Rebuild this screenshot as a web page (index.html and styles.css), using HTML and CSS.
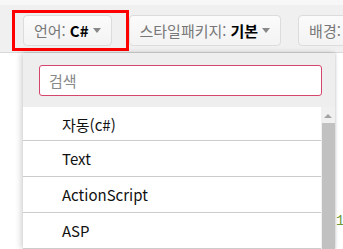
FILE: index.html
```html
<!DOCTYPE html>
<html lang="ko">
<head>
    <meta charset="UTF-8">
    <meta name="viewport" content="width=device-width, initial-scale=1.0">
    <title>코드 하이라이트</title>
    <link rel="stylesheet" href="styles.css">
</head>
<body>
    <div class="top-gap"></div>
    <div class="toolbar">
        <button class="select-btn">언어: <b>C#</b><span class="caret"></span></button>
        <button class="select-btn">스타일패키지: <b>기본</b><span class="caret"></span></button>
        <button class="select-btn">배경: <b>흰색</b><span class="caret"></span></button>
    </div>
    <div class="editor">
        <span class="line-no">1</span>
    </div>

    <!-- annotation around the language button -->
    <div class="highlight-box"></div>

    <div class="dropdown">
        <div class="search-wrap">
            <input type="text" class="search" placeholder="검색" autofocus>
        </div>
        <div class="list-wrap">
            <ul class="lang-list">
                <li class="first">자동(c#)</li>
                <li>Text</li>
                <li>ActionScript</li>
                <li>ASP</li>
            </ul>
            <div class="scrollbar">
                <span class="arrow-up"></span>
                <div class="thumb"></div>
            </div>
        </div>
    </div>
</body>
</html>
```

FILE: styles.css
```css
body {
    font-family: "Noto Sans CJK KR", "Noto Sans", sans-serif;
    margin: 0;
    padding: 0;
    background-color: #fff;
    overflow: hidden;
}
.top-gap {
    height: 5px;
    background-color: #f7f7f7;
}
.toolbar {
    display: flex;
    gap: 17px;
    height: 37px;
    padding: 10px 0 0 23px;
    background-color: #f0f0f0;
    border-bottom: 1px solid #d9d9d9;
    white-space: nowrap;
    overflow: hidden;
}
.select-btn {
    display: flex;
    align-items: center;
    flex-shrink: 0;
    height: 31px;
    padding: 0 10px 0 10px;
    font-family: inherit;
    font-size: 15px;
    color: #777;
    background: linear-gradient(#fbfbfb, #f3f3f3);
    border: 1px solid #dcdcdc;
    border-radius: 4px;
}
.select-btn b {
    color: #000;
    margin-left: 4px;
}
.caret {
    width: 0;
    height: 0;
    margin-left: 4px;
    border-left: 4px solid transparent;
    border-right: 4px solid transparent;
    border-top: 5px solid #888;
}
.editor {
    padding: 153px 0 0 336px;
    height: 40px;
}
.line-no {
    font-family: "Liberation Mono", monospace;
    font-size: 14px;
    color: #6a9a3a;
}
.highlight-box {
    position: absolute;
    left: 12px;
    top: 10px;
    width: 111px;
    height: 35px;
    border: 3px solid #ff0000;
}
.dropdown {
    position: absolute;
    left: 23px;
    top: 53px;
    width: 312px;
    height: 196px;
    overflow: hidden;
    background-color: #eeeeee;
    box-shadow: -2px 0 6px rgba(0, 0, 0, 0.18), 1px 0 2px rgba(0, 0, 0, 0.12);
}
.search-wrap {
    padding: 12px 13px 11px 16px;
}
.search {
    box-sizing: border-box;
    width: 100%;
    height: 31px;
    padding: 0 9px;
    font-family: inherit;
    font-size: 15px;
    border: 1px solid #d5466c;
    border-radius: 3px;
    outline: none;
    background-color: #fff;
}
.search::placeholder {
    color: #888;
}
.list-wrap {
    display: flex;
    height: 142px;
}
.lang-list {
    flex: 1;
    list-style: none;
    margin: 0;
    padding: 0;
    background-color: #fff;
}
.lang-list li {
    height: 35px;
    line-height: 35px;
    padding-left: 39px;
    font-size: 15px;
    color: #111;
    border-bottom: 1px solid #cccccc;
}
.lang-list li.first {
    height: 33px;
    line-height: 35px;
}
.scrollbar {
    width: 14px;
    display: flex;
    flex-direction: column;
    align-items: center;
    background-color: #f0f0f0;
}
.arrow-up {
    width: 0;
    height: 0;
    margin: 7px 0 5px;
    border-left: 4px solid transparent;
    border-right: 4px solid transparent;
    border-bottom: 4px solid #a3a3a3;
}
.thumb {
    width: 13px;
    flex: 1;
    background-color: #c1c1c1;
}
```
